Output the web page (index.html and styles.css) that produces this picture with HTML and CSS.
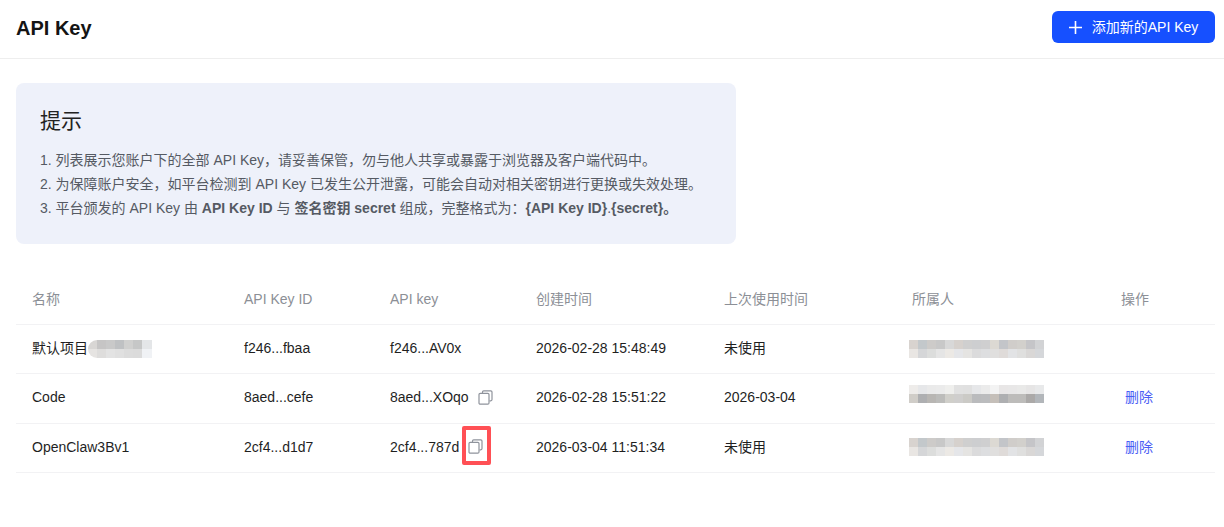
FILE: index.html
```html
<!DOCTYPE html>
<html lang="zh-CN">
<head>
    <meta charset="UTF-8">
    <meta name="viewport" content="width=device-width, initial-scale=1.0">
    <title>API Key</title>
    <link rel="stylesheet" href="styles.css">
</head>
<body>
    <svg class="defs" width="0" height="0">
        <defs>
            <symbol id="copy" viewBox="0 0 15 15">
                <path d="M4.5 3V2a1.2 1.2 0 0 1 1.2-1.2h7.1A1.2 1.2 0 0 1 14 2v7.6a1.2 1.2 0 0 1-1.2 1.2h-1.3" fill="none" stroke="currentColor" stroke-width="1.2"/>
                <rect x="1" y="3.4" width="10" height="10.8" rx="1.2" fill="none" stroke="currentColor" stroke-width="1.2"/>
            </symbol>
            <g id="blur-a">
                <rect x="0" width="9" height="9" fill="#d8d3cf"/><rect x="9" width="9" height="9" fill="#c3c8cb"/><rect x="18" width="9" height="9" fill="#cdcbc9"/><rect x="27" width="9" height="9" fill="#c8c8c8"/><rect x="36" width="9" height="9" fill="#d8d8d8"/><rect x="45" width="9" height="9" fill="#d6d1cd"/><rect x="54" width="9" height="9" fill="#cfcfcf"/><rect x="63" width="9" height="9" fill="#cdced0"/><rect x="72" width="9" height="9" fill="#cfcfd0"/><rect x="81" width="9" height="9" fill="#dcd9d3"/><rect x="90" width="9" height="9" fill="#c3c5c9"/><rect x="99" width="9" height="9" fill="#d0cdca"/><rect x="108" width="9" height="9" fill="#d2d0cc"/><rect x="117" width="9" height="9" fill="#c5c5c8"/><rect x="126" width="9" height="9" fill="#d2d3d5"/>
                <rect x="0" y="9" width="9" height="9" fill="#e9e6e3"/><rect x="9" y="9" width="9" height="9" fill="#d5d6d8"/><rect x="18" y="9" width="9" height="9" fill="#dcdddc"/><rect x="27" y="9" width="9" height="9" fill="#e5e5e5"/><rect x="36" y="9" width="9" height="9" fill="#ece9e5"/><rect x="45" y="9" width="9" height="9" fill="#e5e6e9"/><rect x="54" y="9" width="9" height="9" fill="#e5e4e2"/><rect x="63" y="9" width="9" height="9" fill="#dbdbdc"/><rect x="72" y="9" width="9" height="9" fill="#dddee0"/><rect x="81" y="9" width="9" height="9" fill="#e0dfde"/><rect x="90" y="9" width="9" height="9" fill="#dfdbd9"/><rect x="99" y="9" width="9" height="9" fill="#e2e3e5"/><rect x="108" y="9" width="9" height="9" fill="#dfdfde"/><rect x="117" y="9" width="9" height="9" fill="#d9d7d6"/><rect x="126" y="9" width="9" height="9" fill="#d5d7da"/>
            </g>
            <g id="blur-b">
                <rect x="0" width="9" height="9" fill="#eeecea"/><rect x="9" width="9" height="9" fill="#e6e7e9"/><rect x="18" width="9" height="9" fill="#eaeaea"/><rect x="27" width="9" height="9" fill="#ebebeb"/><rect x="36" width="9" height="9" fill="#efefed"/><rect x="45" width="9" height="9" fill="#e1e1e1"/><rect x="54" width="9" height="9" fill="#e0e0e0"/><rect x="63" width="9" height="9" fill="#e6e7e9"/><rect x="72" width="9" height="9" fill="#ebebeb"/><rect x="81" width="9" height="9" fill="#f3f3f3"/><rect x="90" width="9" height="9" fill="#e8e6e6"/><rect x="99" width="9" height="9" fill="#e8e7e7"/><rect x="108" width="9" height="9" fill="#e9e9e8"/><rect x="117" width="9" height="9" fill="#e6e5e5"/><rect x="126" width="9" height="9" fill="#e8e9ea"/>
                <rect x="0" y="9" width="9" height="9" fill="#d0cdc8"/><rect x="9" y="9" width="9" height="9" fill="#aeafb1"/><rect x="18" y="9" width="9" height="9" fill="#b8b6b3"/><rect x="27" y="9" width="9" height="9" fill="#bcbcba"/><rect x="36" y="9" width="9" height="9" fill="#d0cfca"/><rect x="45" y="9" width="9" height="9" fill="#cfcecd"/><rect x="54" y="9" width="9" height="9" fill="#cbcac6"/><rect x="63" y="9" width="9" height="9" fill="#babbbd"/><rect x="72" y="9" width="9" height="9" fill="#bbbcbe"/><rect x="81" y="9" width="9" height="9" fill="#c5bfb9"/><rect x="90" y="9" width="9" height="9" fill="#aeafb1"/><rect x="99" y="9" width="9" height="9" fill="#bdbcba"/><rect x="108" y="9" width="9" height="9" fill="#bdbcba"/><rect x="117" y="9" width="9" height="9" fill="#aba9a8"/><rect x="126" y="9" width="9" height="9" fill="#b2b6ba"/>
            </g>
        </defs>
    </svg>

    <header class="topbar">
        <h1>API Key</h1>
        <button class="btn-add">
            <svg class="plus" width="13" height="13" viewBox="0 0 13 13"><path d="M6.5 0v13M0 6.5h13" stroke="#fff" stroke-width="1.6" fill="none"/></svg>
            <span class="btn-label">添加新的API Key</span>
        </button>
    </header>

    <main class="content">
        <section class="tips">
            <h2>提示</h2>
            <p>1. 列表展示您账户下的全部 API Key，请妥善保管，勿与他人共享或暴露于浏览器及客户端代码中。</p>
            <p>2. 为保障账户安全，如平台检测到 API Key 已发生公开泄露，可能会自动对相关密钥进行更换或失效处理。</p>
            <p>3. 平台颁发的 API Key 由 <b>API Key ID</b> 与 <b>签名密钥 secret</b> 组成，完整格式为：<b>{API Key ID}</b>.<b>{secret}。</b></p>
        </section>

        <table class="keys">
            <colgroup>
                <col class="c-name"><col class="c-id"><col class="c-key"><col class="c-created"><col class="c-used"><col class="c-owner"><col class="c-op">
            </colgroup>
            <thead>
                <tr><th>名称</th><th>API Key ID</th><th>API key</th><th>创建时间</th><th>上次使用时间</th><th>所属人</th><th>操作</th></tr>
            </thead>
            <tbody>
                <tr>
                    <td><span class="name-cell">默认项目<svg class="blur-name" width="64" height="18" viewBox="0 0 64 18"><rect width="9" height="9" fill="#d8d6d4"/><rect x="9" width="9" height="9" fill="#c6c5c5"/><rect x="18" width="9" height="9" fill="#c9c9c9"/><rect x="27" width="9" height="9" fill="#bfc1c3"/><rect x="36" width="9" height="9" fill="#d0d0cf"/><rect x="45" width="9" height="9" fill="#c6c7c7"/><rect x="54" width="10" height="9" fill="#e4e6e8"/><rect y="9" width="9" height="9" fill="#e6e4e2"/><rect x="9" y="9" width="9" height="9" fill="#dedddc"/><rect x="18" y="9" width="9" height="9" fill="#e3e3e3"/><rect x="27" y="9" width="9" height="9" fill="#e0e0e0"/><rect x="36" y="9" width="9" height="9" fill="#dcdcdc"/><rect x="45" y="9" width="9" height="9" fill="#dbdbdb"/><rect x="54" y="9" width="10" height="9" fill="#f0f2f5"/></svg></span></td>
                    <td>f246...fbaa</td>
                    <td>f246...AV0x</td>
                    <td>2026-02-28 15:48:49</td>
                    <td>未使用</td>
                    <td><svg class="blur-owner row-first" width="135" height="18"><use href="#blur-a"/></svg></td>
                    <td></td>
                </tr>
                <tr>
                    <td>Code</td>
                    <td>8aed...cefe</td>
                    <td><span class="key-cell">8aed...XOqo<span class="copy"><svg width="15" height="15"><use href="#copy"/></svg></span></span></td>
                    <td>2026-02-28 15:51:22</td>
                    <td>2026-03-04</td>
                    <td><svg class="blur-owner row-second" width="135" height="18"><use href="#blur-b"/></svg></td>
                    <td><a class="del" href="#">删除</a></td>
                </tr>
                <tr class="last">
                    <td>OpenClaw3Bv1</td>
                    <td>2cf4...d1d7</td>
                    <td><span class="key-cell">2cf4...787d<span class="copy marked"><svg width="15" height="15"><use href="#copy"/></svg></span></span></td>
                    <td>2026-03-04 11:51:34</td>
                    <td>未使用</td>
                    <td><svg class="blur-owner" width="135" height="18"><use href="#blur-a"/></svg></td>
                    <td><a class="del" href="#">删除</a></td>
                </tr>
            </tbody>
        </table>
    </main>
</body>
</html>
```

FILE: styles.css
```css
html, body {
    margin: 0;
    padding: 0;
}
body {
    background: #fff;
    color: #1a1a1a;
    font-family: "Liberation Sans", "Noto Sans CJK SC", sans-serif;
    font-size: 14px;
    overflow: hidden;
}
.defs {
    position: absolute;
}
.topbar {
    height: 58px;
    border-bottom: 1px solid #eeeeee;
    display: flex;
    align-items: center;
    justify-content: space-between;
    padding: 0 9px 0 16px;
}
h1 {
    margin: 0 0 3px;
    font-size: 20px;
    line-height: 24px;
    font-weight: 700;
    color: #141414;
}
.btn-add {
    width: 163px;
    height: 32px;
    margin-bottom: 4px;
    background: #1650ff;
    color: #fff;
    border: 0;
    border-radius: 6px;
    font: inherit;
    display: flex;
    align-items: center;
    justify-content: center;
    gap: 10px;
    padding: 0;
}
.btn-label {
    line-height: 20px;
}
.content {
    padding: 24px 9px 0 16px;
}
.tips {
    width: 720px;
    height: 161px;
    box-sizing: border-box;
    padding: 23px 24px 0;
    background: #eef1fa;
    border-radius: 8px;
    color: #555a63;
}
.tips h2 {
    margin: 0 0 12px;
    font-size: 21px;
    line-height: 30px;
    font-weight: 400;
    color: #222;
}
.tips p {
    margin: 0;
    font-size: 14px;
    line-height: 24px;
}
.tips b {
    font-weight: 700;
}
.keys {
    margin-top: 31px;
    width: 1199px;
    table-layout: fixed;
    border-collapse: collapse;
}
.c-name { width: 212px; }
.c-id { width: 146px; }
.c-key { width: 146px; }
.c-created { width: 188px; }
.c-used { width: 188px; }
.c-owner { width: 209px; }
.c-op { width: 110px; }
.keys th {
    height: 48px;
    padding: 0 0 1px 16px;
    line-height: 20px;
    text-align: left;
    font-weight: 400;
    color: #8c8f96;
    border-bottom: 1px solid #f2f2f4;
}
.keys td {
    height: 45.4px;
    padding: 0 0 3px 16px;
    line-height: 20px;
    color: #1f1f1f;
    border-bottom: 1px solid #f2f2f4;
}
.keys .last td {
    height: 46.4px;
    padding-bottom: 2px;
}
.name-cell, .key-cell {
    display: flex;
    align-items: center;
}
.blur-name {
    border-radius: 9px 0 0 9px;
    transform: translateY(1px);
}
.blur-owner {
    display: block;
    margin-left: -3px;
}
/* redaction patches sit a little off the row centre */
.blur-owner.row-first {
    transform: translateY(1px);
}
.blur-owner.row-second {
    transform: translateY(-3px);
}
.copy {
    position: relative;
    display: flex;
    margin-left: 9px;
    color: #8f939c;
}
.copy.marked::after {
    content: "";
    position: absolute;
    left: -6px;
    top: -13px;
    width: 29px;
    height: 39px;
    box-sizing: border-box;
    border: 4px solid #ff5055;
    border-radius: 2px;
}
.del {
    color: #4a5cf5;
    text-decoration: none;
    margin-left: 4px;
}
```
